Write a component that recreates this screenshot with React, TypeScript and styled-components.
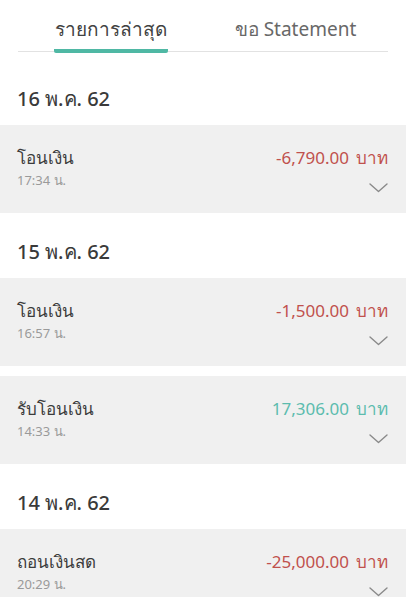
import React from "react";
import styled, { createGlobalStyle } from "styled-components";

const GlobalStyle = createGlobalStyle`
	body {
		margin: 0;
		background: #ffffff;
		font-family: "Noto Sans", "Open Sans", "DejaVu Sans", sans-serif;
		color: #3a3a3a;
	}
`;

type Txn = {
	title: string;
	time: string;
	amount: string;
	income?: boolean;
};

type DayGroup = {
	date: string;
	items: Txn[];
};

const groups: DayGroup[] = [
	{
		date: "16 พ.ค. 62",
		items: [{ title: "โอนเงิน", time: "17:34 น.", amount: "-6,790.00" }],
	},
	{
		date: "15 พ.ค. 62",
		items: [
			{ title: "โอนเงิน", time: "16:57 น.", amount: "-1,500.00" },
			{ title: "รับโอนเงิน", time: "14:33 น.", amount: "17,306.00", income: true },
		],
	},
	{
		date: "14 พ.ค. 62",
		items: [{ title: "ถอนเงินสด", time: "20:29 น.", amount: "-25,000.00" }],
	},
];

export default function App() {
	return (
		<>
			<GlobalStyle />
			<Page>
				<TabBar>
					<Tab>
						<TabLabel $active>รายการล่าสุด</TabLabel>
					</Tab>
					<Tab>
						<TabLabel>ขอ Statement</TabLabel>
					</Tab>
				</TabBar>
				{groups.map((g, i) => (
					<section key={g.date}>
						<DateHeader $first={i === 0}>{g.date}</DateHeader>
						<List>
							{g.items.map((t) => (
								<Row key={t.title + t.time}>
									<Title>{t.title}</Title>
									<Amount $income={t.income}>
										{t.amount}
										<Unit>บาท</Unit>
									</Amount>
									<Time>{t.time}</Time>
									<Chevron />
								</Row>
							))}
						</List>
					</section>
				))}
			</Page>
		</>
	);
}

// ลูกศรเปิดรายละเอียด
const Chevron = () => (
	<ChevronBox>
		<svg width="19" height="10" viewBox="0 0 19 10" fill="none">
			<path d="M1 1 L9.5 8.5 L18 1" stroke="#8a8a8a" strokeWidth="1.4" strokeLinecap="round" strokeLinejoin="round" />
		</svg>
	</ChevronBox>
);

const Page = styled.div`
	width: 406px;
	height: 597px;
	overflow: hidden;
`;

const TabBar = styled.div`
	display: flex;
	margin: 0 18px;
	height: 51px;
	border-bottom: 1px solid #e2e2e2;
`;

const Tab = styled.div`
	flex: 1;
	display: flex;
	justify-content: center;
	align-items: flex-end;
`;

const TabLabel = styled.span<{ $active?: boolean }>`
	font-size: 19px;
	line-height: 24px;
	padding: 0 1px 8px;
	margin-bottom: -2px;
	color: ${(p) => (p.$active ? "#424242" : "#686868")};
	border-bottom: 4px solid ${(p) => (p.$active ? "#4fb8a4" : "transparent")};
	border-radius: 2px;
`;

const DateHeader = styled.h2<{ $first?: boolean }>`
	margin: 0;
	padding: ${(p) => (p.$first ? "36px" : "28px")} 17px 15px;
	font-size: 20px;
	line-height: 22px;
	font-weight: 500;
	color: #3a3a3a;
`;

const List = styled.div`
	display: flex;
	flex-direction: column;
	gap: 10px;
`;

const Row = styled.div`
	background: #f0f0f0;
	height: 88px;
	box-sizing: border-box;
	padding: 21px 18px 0 17px;
	display: grid;
	grid-template-columns: 1fr auto;
	grid-template-rows: 24px auto;
`;

const Title = styled.div`
	font-size: 17px;
	line-height: 24px;
	font-weight: 400;
	color: #3c3c3c;
`;

const Amount = styled.div<{ $income?: boolean }>`
	font-size: 17px;
	line-height: 24px;
	color: ${(p) => (p.$income ? "#5cbcae" : "#c0514d")};
	text-align: right;
`;

const Unit = styled.span`
	margin-left: 7px;
`;

const Time = styled.div`
	font-size: 13px;
	line-height: 18px;
	color: #9a9a9a;
	margin-top: 1px;
`;

const ChevronBox = styled.div`
	display: flex;
	justify-content: flex-end;
	padding-top: 13px;
`;
